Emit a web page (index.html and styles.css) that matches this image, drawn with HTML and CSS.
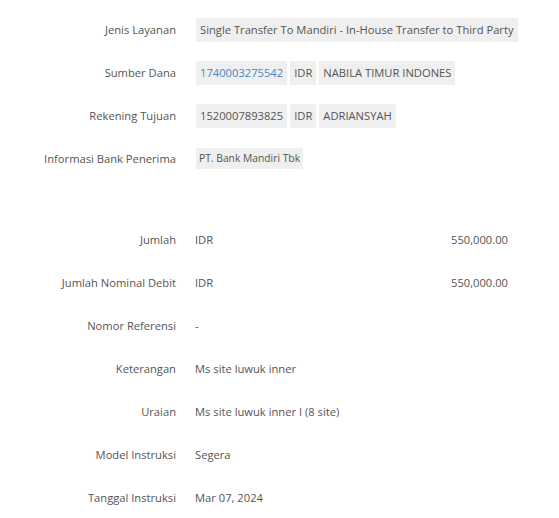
FILE: index.html
```html
<!DOCTYPE html>
<html lang="id">
<head>
    <meta charset="UTF-8">
    <meta name="viewport" content="width=device-width, initial-scale=1.0">
    <title>Detail Transaksi</title>
    <link rel="stylesheet" href="styles.css">
</head>
<body>
    <div class="detail">
        <!-- Info transfer -->
        <div class="group">
            <div class="row">
                <div class="label">Jenis Layanan</div>
                <div class="value">
                    <span class="chip">Single Transfer To Mandiri - In-House Transfer to Third Party</span>
                </div>
            </div>
            <div class="row">
                <div class="label">Sumber Dana</div>
                <div class="value">
                    <span class="chip link">1740003275542</span>
                    <span class="chip">IDR</span>
                    <span class="chip">NABILA TIMUR INDONES</span>
                </div>
            </div>
            <div class="row">
                <div class="label">Rekening Tujuan</div>
                <div class="value">
                    <span class="chip">1520007893825</span>
                    <span class="chip">IDR</span>
                    <span class="chip">ADRIANSYAH</span>
                </div>
            </div>
            <div class="row">
                <div class="label">Informasi Bank Penerima</div>
                <div class="value">
                    <span class="chip small">PT. Bank Mandiri Tbk</span>
                </div>
            </div>
        </div>

        <!-- Nominal dan instruksi -->
        <div class="group second">
            <div class="row">
                <div class="label">Jumlah</div>
                <div class="value amount">
                    <span>IDR</span>
                    <span>550,000.00</span>
                </div>
            </div>
            <div class="row">
                <div class="label">Jumlah Nominal Debit</div>
                <div class="value amount">
                    <span>IDR</span>
                    <span>550,000.00</span>
                </div>
            </div>
            <div class="row">
                <div class="label">Nomor Referensi</div>
                <div class="value">-</div>
            </div>
            <div class="row">
                <div class="label">Keterangan</div>
                <div class="value">Ms site luwuk inner</div>
            </div>
            <div class="row">
                <div class="label">Uraian</div>
                <div class="value">Ms site luwuk inner I (8 site)</div>
            </div>
            <div class="row">
                <div class="label">Model Instruksi</div>
                <div class="value">Segera</div>
            </div>
            <div class="row">
                <div class="label">Tanggal Instruksi</div>
                <div class="value">Mar 07, 2024</div>
            </div>
        </div>
    </div>
</body>
</html>
```

FILE: styles.css
```css
/* General Styles */
body {
    font-family: "Open Sans", Arial, sans-serif;
    font-size: 11.2px;
    background-color: #fff;
    margin: 0;
    padding: 0;
    color: #555;
}

/* Detail List */
.detail {
    padding-top: 8px;
}

.group.second {
    margin-top: 38px;
}

.row {
    display: flex;
    align-items: center;
    height: 43px;
}

.label {
    width: 176px;
    text-align: right;
    flex-shrink: 0;
}

.value {
    margin-left: 19px;
    display: flex;
    align-items: center;
    gap: 3px;
    color: #555;
}

.value.amount {
    width: 313px;
    justify-content: space-between;
}

.chip {
    background-color: #efefef;
    padding: 0 4px;
    line-height: 24px;
    white-space: nowrap;
}

.chip:first-child {
    margin-left: 1px;
}

.chip.link {
    color: #4a86c4;
}

.chip.small {
    font-size: 10.3px;
    line-height: 21px;
    padding: 0 3px;
}
```
